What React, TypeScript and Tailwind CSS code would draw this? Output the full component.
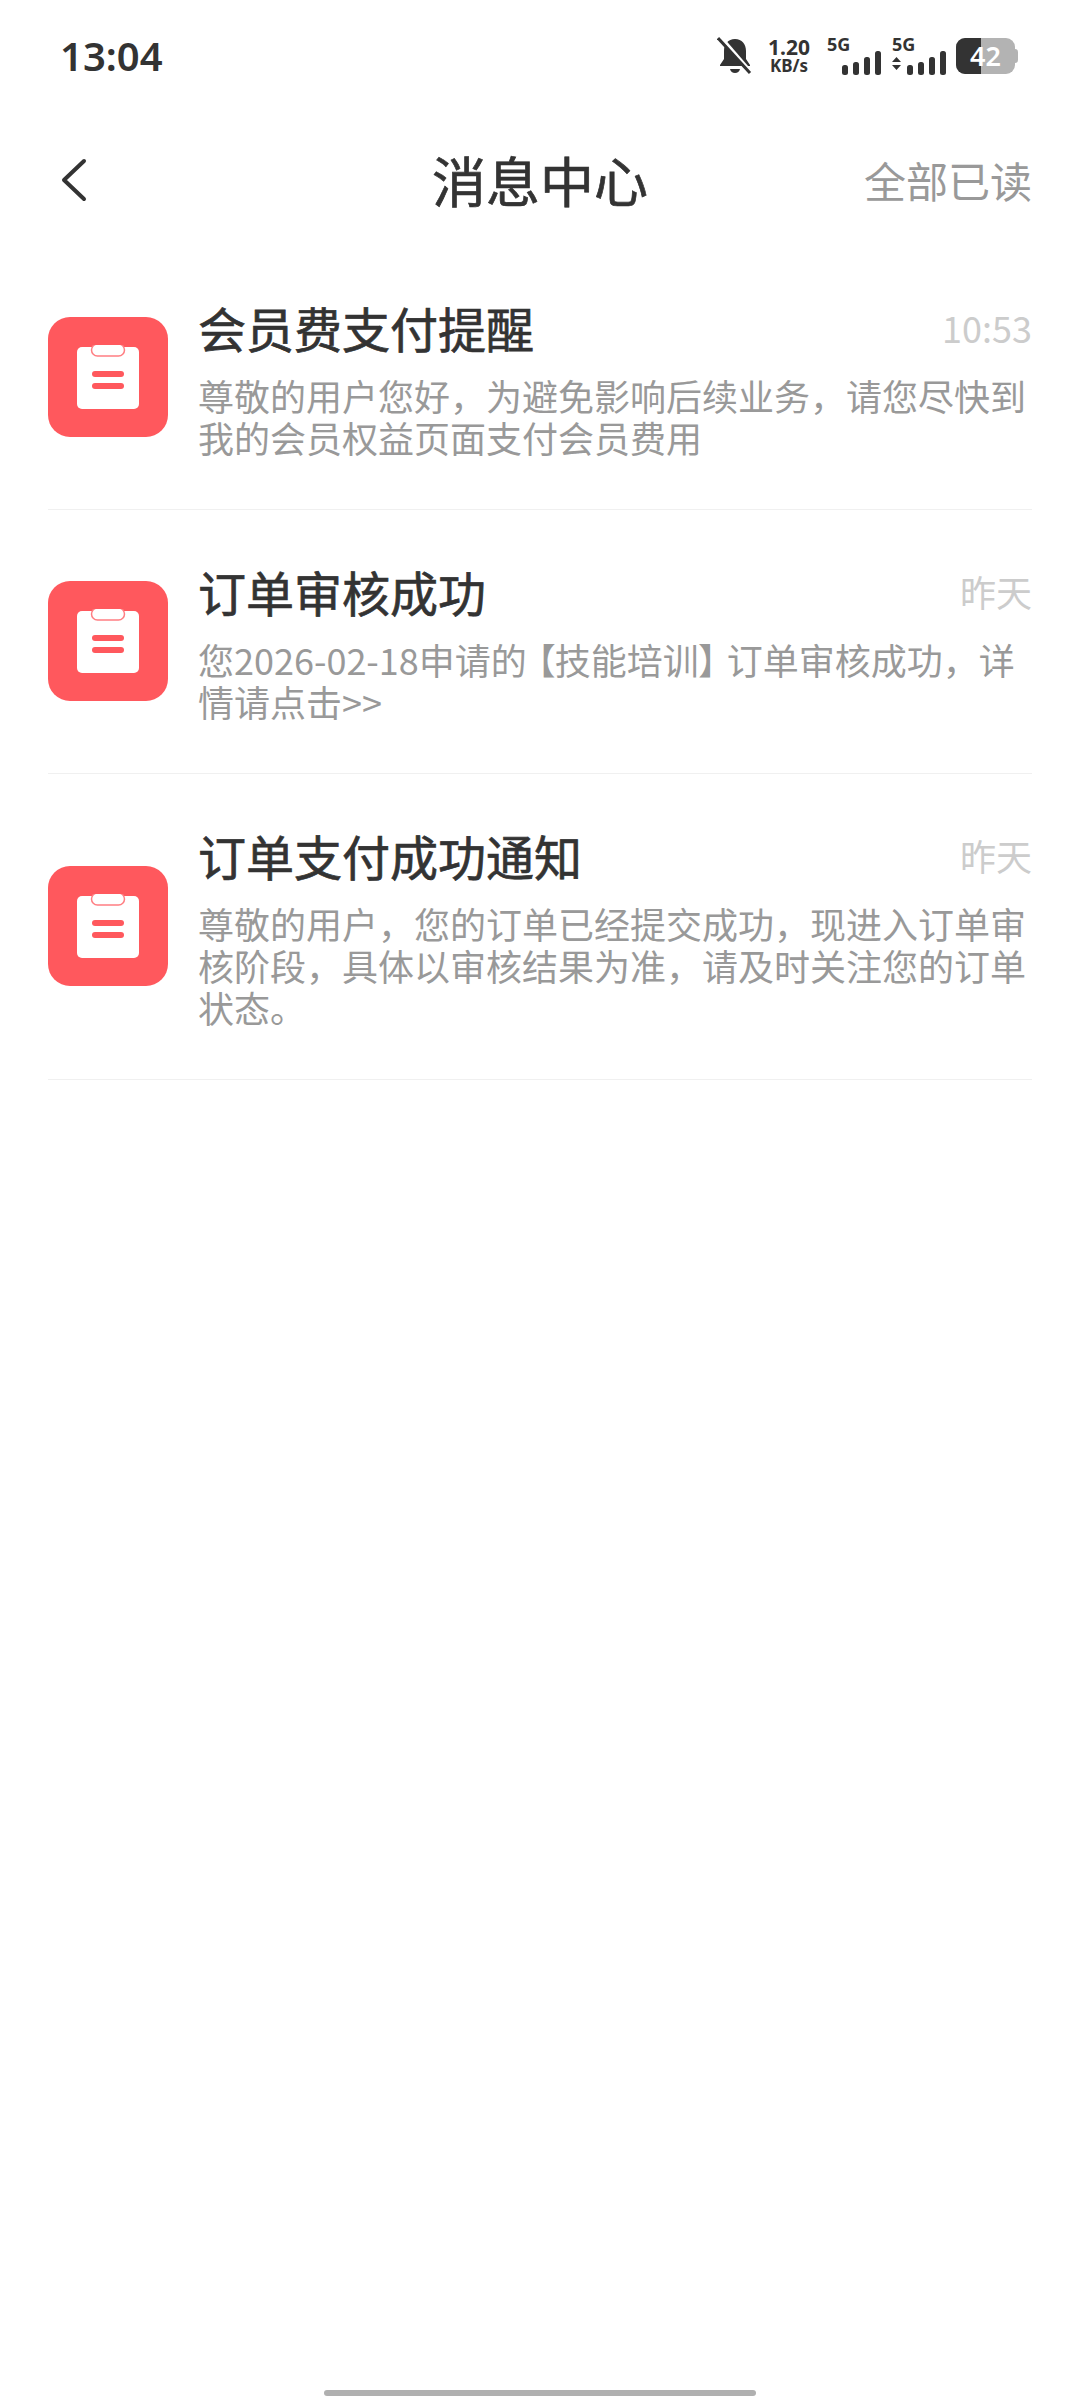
const font = { fontFamily: '"Noto Sans CJK SC", "Noto Sans", sans-serif' };
const latin = { fontFamily: '"Noto Sans", sans-serif' };

const messages = [
  {
    title: "会员费支付提醒",
    time: "10:53",
    body: <>尊敬的用户您好，为避免影响后续业务，请您尽快到我的会员权益页面支付会员费用</>,
  },
  {
    title: "订单审核成功",
    time: "昨天",
    body: (
      <>
        您2026-02-18申请的<span className="mx-[10px] [font-feature-settings:'palt']">【技能培训】</span>订单审核成功，详
        <br />
        情请点击&gt;&gt;
      </>
    ),
  },
  {
    title: "订单支付成功通知",
    time: "昨天",
    body: <>尊敬的用户，您的订单已经提交成功，现进入订单审核阶段，具体以审核结果为准，请及时关注您的订单状态。</>,
  },
];

const ClipIcon = () => (
  <div className="flex h-[120px] w-[120px] flex-none items-center justify-center rounded-[22px] bg-[#ff585d]">
    <svg width="62" height="64" viewBox="0 0 62 64">
      <rect x="0" y="2" width="62" height="62" rx="5" fill="#fff" />
      <rect x="14.500" y="-1" width="33" height="12" rx="6" fill="#fff" stroke="#ff7e82" strokeWidth="1.500" />
      <rect x="15" y="26" width="32" height="6" rx="3" fill="#ff585d" />
      <rect x="15" y="38" width="32" height="6" rx="3" fill="#ff585d" />
    </svg>
  </div>
);

const Signal = ({ arrows }: { arrows?: boolean }) => (
  <svg width="54" height="24" viewBox="0 0 54 24" fill="#333">
    {arrows && <path d="M0 11l4.500-5 4.500 5zM0 14l4.500 5 4.500-5z" />}
    <rect x="15" y="14" width="6" height="10" rx="2.500" />
    <rect x="26" y="11" width="6" height="13" rx="2.500" />
    <rect x="37" y="6" width="6" height="18" rx="2.500" />
    <rect x="48" y="0" width="6" height="24" rx="2.500" />
  </svg>
);

const StatusBar = () => (
  <div className="flex h-[56px] items-center justify-between pl-[60px] pr-[62px]">
    <span className="text-[40px] font-semibold text-[#333]" style={latin}>
      13:04
    </span>
    <div className="flex items-center">
      <svg width="36" height="38" viewBox="0 0 36 38">
        <path d="M18 2c7 0 11 5 11 12v8l4 6v1H3v-1l4-6v-8C7 7 11 2 18 2z" fill="#333" />
        <path d="M13 32h10q-1 4-5 4t-5-4z" fill="#333" />
        <path d="M4 0l31 36" stroke="#fff" strokeWidth="3" />
        <path d="M1 1l32 35" stroke="#333" strokeWidth="3" />
      </svg>
      <div className="ml-[14px] flex w-[44px] flex-col items-center font-bold text-[#333]" style={latin}>
        <span className="text-[21px] leading-[20px]">1.20</span>
        <span className="text-[17px] leading-[18px]">KB/s</span>
      </div>
      <div className="ml-[16px] flex h-[38px] w-[54px] flex-col justify-between">
        <span className="h-[14px] text-[18px] font-bold leading-[14px] text-[#333]" style={latin}>5G</span>
        <Signal />
      </div>
      <div className="ml-[11px] flex h-[38px] w-[54px] flex-col justify-between">
        <span className="h-[14px] text-[18px] font-bold leading-[14px] text-[#333]" style={latin}>5G</span>
        <Signal arrows />
      </div>
      <div className="relative ml-[10px] flex h-[36px] w-[59px] overflow-hidden rounded-[9px] bg-[#b3b3b3]">
        <div className="h-full w-[25px] bg-[#333]" />
        <span className="absolute inset-0 flex items-center justify-center text-[27px] font-semibold text-white" style={latin}>42</span>
      </div>
      <div className="h-[14px] w-[3px] rounded-r bg-[#b3b3b3]" />
    </div>
  </div>
);

const Header = () => (
  <div className="relative mt-[45px] flex h-[100px] items-center justify-center">
    <svg className="absolute left-[60px] mt-[2px]" width="28" height="44" viewBox="0 0 28 44" fill="none">
      <path d="M24 3L4 22l20 19" stroke="#333" strokeWidth="4" strokeLinecap="round" strokeLinejoin="round" />
    </svg>
    <h1 className="text-[54px] font-normal text-[#333] [-webkit-text-stroke:0.7px_#333]">消息中心</h1>
    <span className="absolute right-[48px] text-[42px] text-[#999]">全部已读</span>
  </div>
);

export default function App() {
  return (
    <div className="relative flex h-[2400px] w-[1080px] flex-col overflow-hidden bg-white" style={font}>
      <div className="h-[28px]" />
      <StatusBar />
      <Header />
      <div className="mt-[17px] px-[48px]">
        {messages.map((m) => (
          <div key={m.title} className="flex items-center gap-[30px] border-b border-[#f0f0f0] pb-[51px] pt-[49px]">
            <ClipIcon />
            <div className="min-w-0 flex-1">
              <div className="flex items-center justify-between">
                <span className="text-[48px] leading-[64px] font-normal text-[#333] [-webkit-text-stroke:0.7px_#333]">{m.title}</span>
                <span className="text-[36px] text-[#ccc]">{m.time}</span>
              </div>
              <p className="mt-[15px] text-[36px] leading-[42px] text-[#999]">{m.body}</p>
            </div>
          </div>
        ))}
      </div>
      <div className="absolute bottom-[4px] left-[324px] h-[6px] w-[432px] rounded-full bg-[#b0b0b0]" />
    </div>
  );
}
